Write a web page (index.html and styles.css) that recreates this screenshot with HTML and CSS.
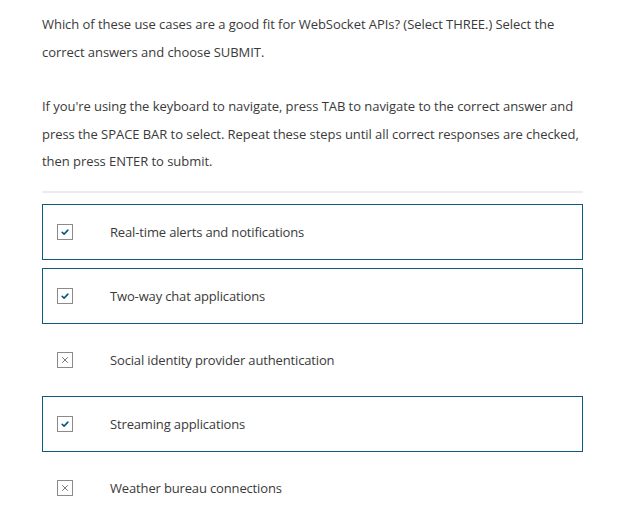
FILE: index.html
```html
<!DOCTYPE html>
<html lang="en">
<head>
<meta charset="utf-8">
<link rel="stylesheet" href="styles.css">
</head>
<body>
<main class="question">
  <p class="prompt">Which of these use cases are a good fit for WebSocket APIs? (Select THREE.) Select the correct answers and choose SUBMIT.</p>
  <p class="prompt">If you're using the keyboard to navigate, press TAB to navigate to the correct answer and press the SPACE BAR to select. Repeat these steps until all correct responses are checked, then press ENTER to submit.</p>
  <hr class="divider">
  <ul class="options">
    <li class="option selected">
      <span class="box"><svg viewBox="0 0 16 16" width="16" height="16"><path d="M5.2 8.3 L7.1 10.1 L10.9 6.1" fill="none" stroke="#0b5b80" stroke-width="1.6" stroke-linecap="round" stroke-linejoin="round"/></svg></span>
      <span class="label">Real-time alerts and notifications</span>
    </li>
    <li class="option selected">
      <span class="box"><svg viewBox="0 0 16 16" width="16" height="16"><path d="M5.2 8.3 L7.1 10.1 L10.9 6.1" fill="none" stroke="#0b5b80" stroke-width="1.6" stroke-linecap="round" stroke-linejoin="round"/></svg></span>
      <span class="label">Two-way chat applications</span>
    </li>
    <li class="option">
      <span class="box"><svg viewBox="0 0 16 16" width="16" height="16"><path d="M5.5 5.5 L10.5 10.5 M10.5 5.5 L5.5 10.5" fill="none" stroke="#7a7a7a" stroke-width="1" stroke-linecap="round"/></svg></span>
      <span class="label">Social identity provider authentication</span>
    </li>
    <li class="option selected">
      <span class="box"><svg viewBox="0 0 16 16" width="16" height="16"><path d="M5.2 8.3 L7.1 10.1 L10.9 6.1" fill="none" stroke="#0b5b80" stroke-width="1.6" stroke-linecap="round" stroke-linejoin="round"/></svg></span>
      <span class="label">Streaming applications</span>
    </li>
    <li class="option">
      <span class="box"><svg viewBox="0 0 16 16" width="16" height="16"><path d="M5.5 5.5 L10.5 10.5 M10.5 5.5 L5.5 10.5" fill="none" stroke="#7a7a7a" stroke-width="1" stroke-linecap="round"/></svg></span>
      <span class="label">Weather bureau connections</span>
    </li>
  </ul>
</main>
</body>
</html>
```

FILE: styles.css
```css
html, body {
  margin: 0;
  padding: 0;
  background: #ffffff;
}
body {
  font-family: "Open Sans", "Noto Sans", sans-serif;
  font-size: 13px;
  color: #3a3a3a;
}
.question {
  width: 541px;
  padding: 11px 0 0 42px;
}
.prompt {
  margin: 0 0 27px 0;
  line-height: 27.5px;
  letter-spacing: -0.05px;
}
.prompt + .prompt {
  margin-bottom: 15px;
}
.divider {
  border: 0;
  height: 2px;
  background: #ececec;
  margin: 0 0 11px 0;
}
.options {
  list-style: none;
  margin: 0;
  padding: 0;
  display: flex;
  flex-direction: column;
  gap: 8px;
}
.option {
  height: 56px;
  box-sizing: border-box;
  border: 1px solid transparent;
  display: flex;
  align-items: center;
  padding-left: 14px;
}
.option.selected {
  border-color: #0d5a7b;
}
.box {
  width: 16px;
  height: 16px;
  box-sizing: border-box;
  border: 1px solid #8a8a8a;
  display: flex;
  align-items: center;
  justify-content: center;
  margin-right: 37px;
  flex-shrink: 0;
}
.box svg {
  display: block;
  flex-shrink: 0;
}
.label {
  line-height: 20px;
  letter-spacing: -0.15px;
}
```
